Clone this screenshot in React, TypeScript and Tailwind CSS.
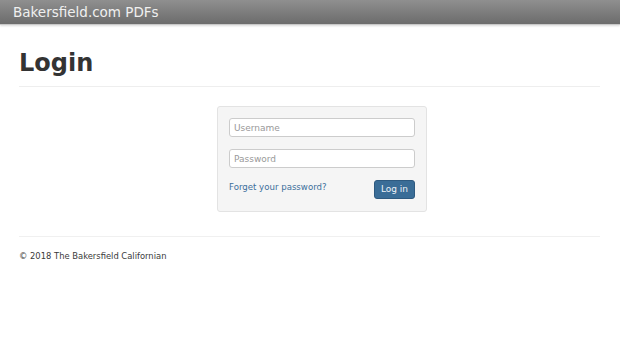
import React from "react";

export default function App() {
  return (
    <div className="w-[620px] h-[343px] bg-white overflow-hidden" style={{ fontFamily: '"DejaVu Sans", Verdana, sans-serif' }}>
      <div className="h-[25px] bg-gradient-to-b from-[#8f8f8f] to-[#6c6c6c] border-b border-[#c8c8c8] flex items-center pl-[13px] shadow-[0_1px_2px_rgba(0,0,0,0.15)]">
        <span className="text-[13.5px] text-[#f0f0f0]">Bakersfield.com PDFs</span>
      </div>
      <div className="px-[19px] pr-[20px]">
        <div className="pt-[23px] pb-[8px] border-b border-[#eeeeee]">
          <h1 className="text-[24px] font-bold text-[#333] leading-[30px]">Login</h1>
        </div>
        <div className="flex justify-start pl-[198px] pt-[19px] pb-[24px] border-b border-[#f0f0f0]">
          <div className="w-[210px] bg-[#f5f5f5] border border-[#e3e3e3] rounded-[3px] pt-[11px] pb-[12px] px-[11px] flex flex-col">
            <input
              className="h-[19px] w-full bg-white border border-[#cccccc] rounded-[3px] px-[4px] text-[9px] text-[#555] placeholder:text-[#999] outline-none"
              placeholder="Username"
            />
            <input
              className="mt-[12px] h-[19px] w-full bg-white border border-[#cccccc] rounded-[3px] px-[4px] text-[9px] text-[#555] placeholder:text-[#999] outline-none"
              placeholder="Password"
              type="password"
            />
            <div className="mt-[12px] flex items-start justify-between">
              <a className="text-[8.6px] text-[#3c6f9c] leading-[14px]" href="#">Forget your password?</a>
              <button className="h-[19px] w-[41px] bg-[#3a6d97] border border-[#2e5a80] rounded-[3px] text-[9px] text-[#eef3f8]">Log in</button>
            </div>
          </div>
        </div>
        <div className="pt-[13px] text-[8.4px] text-[#3a3a3a]">© 2018 The Bakersfield Californian</div>
      </div>
    </div>
  );
}
